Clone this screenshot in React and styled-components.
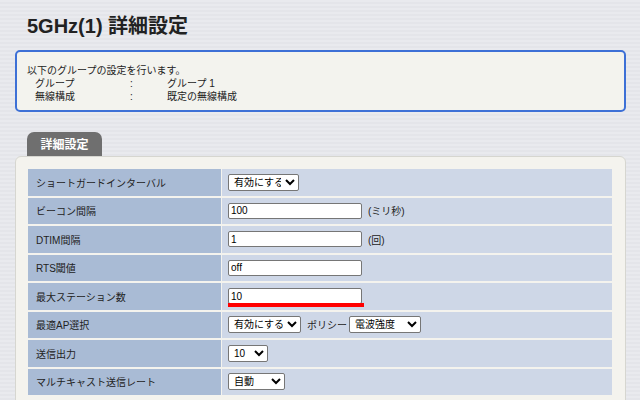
import styled, { createGlobalStyle } from 'styled-components';

const Global = createGlobalStyle`
  body {
    margin: 0;
    font-family: "Liberation Sans", "Noto Sans CJK JP", sans-serif;
    background: repeating-linear-gradient(180deg, #e9eaee 0px, #e9eaee 2px, #dfe0e5 3px, #e9eaee 4px);
    color: #222;
  }
`;

const Page = styled.div`
  width: 640px;
  height: 400px;
  overflow: hidden;
  padding: 14px 14px 0 15px;
  box-sizing: border-box;
`;

const Title = styled.h1`
  margin: 0 0 12px 12px;
  font-size: 20px;
  font-weight: bold;
  line-height: 24px;
  font-family: "Liberation Sans", "Noto Sans CJK JP", sans-serif;
`;

const InfoBox = styled.div`
  border: 2px solid #3d70d6;
  border-radius: 5px;
  background: #f3f3ee;
  padding: 12px 10px 10px;
  height: 62px;
  box-sizing: border-box;
  font-size: 10px;
  line-height: 13px;
`;

const InfoRow = styled.div`
  display: grid;
  grid-template-columns: 95px 37px auto;
  padding-left: 8px;
`;

const Tab = styled.div`
  margin: 20px 0 0 12px;
  width: 75px;
  height: 24px;
  background: #6f6f6f;
  color: #fff;
  font-weight: bold;
  font-size: 12px;
  line-height: 26px;
  text-align: center;
  border-radius: 7px 7px 0 0;
`;

const Panel = styled.div`
  background: #f4f3ee;
  border: 1px solid #d6d6d0;
  border-radius: 6px 6px 0 0;
  padding: 12px 13px 0 12px;
  height: 260px;
`;

const Table = styled.div`
  display: grid;
  grid-template-columns: 194px 1fr;
  row-gap: 2px;
`;

const Label = styled.div`
  background: #a9bbd5;
  height: 26.5px;
  font-size: 10px;
  display: flex;
  align-items: center;
  padding-left: 8px;
  margin-right: 1px;
`;

const Value = styled.div`
  background: #ced7e7;
  height: 26.5px;
  display: flex;
  align-items: center;
  padding-left: 6px;
  gap: 6px;
  font-size: 10px;
  position: relative;
`;

const Input = styled.input`
  width: 134px;
  height: 16px;
  box-sizing: border-box;
  border: 1px solid #767676;
  border-radius: 2px;
  font-size: 10px;
  padding: 0 2px;
  font-family: inherit;
`;

const Select = styled.select`
  height: 17px;
  width: ${p => p.w}px;
  font-size: 10px;
  font-family: inherit;
  border: 1px solid #767676;
  border-radius: 2px;
  background: #fff;
  padding: 0 1px;
`;

const RedBar = styled.div`
  position: absolute;
  left: 6px;
  top: 20px;
  width: 136px;
  height: 4px;
  background: #f00;
`;

export default function App() {
  return (
    <Page>
      <Global />
      <Title>5GHz(1) 詳細設定</Title>
      <InfoBox>
        <div>以下のグループの設定を行います。</div>
        <InfoRow><span>グループ</span><span>:</span><span>グループ 1</span></InfoRow>
        <InfoRow><span>無線構成</span><span>:</span><span>既定の無線構成</span></InfoRow>
      </InfoBox>
      <Tab>詳細設定</Tab>
      <Panel>
        <Table>
          <Label>ショートガードインターバル</Label>
          <Value><Select w={71}><option>有効にする</option></Select></Value>
          <Label>ビーコン間隔</Label>
          <Value><Input defaultValue="100" /><span>(ミリ秒)</span></Value>
          <Label>DTIM間隔</Label>
          <Value><Input defaultValue="1" /><span>(回)</span></Value>
          <Label>RTS閾値</Label>
          <Value><Input defaultValue="off" /></Value>
          <Label>最大ステーション数</Label>
          <Value><Input defaultValue="10" /><RedBar /></Value>
          <Label>最適AP選択</Label>
          <Value>
            <Select w={73}><option>有効にする</option></Select>
            <span>ポリシー</span>
            <Select w={72} style={{ marginLeft: -4 }}><option>電波強度</option></Select>
          </Value>
          <Label>送信出力</Label>
          <Value><Select w={40}><option>10</option></Select></Value>
          <Label>マルチキャスト送信レート</Label>
          <Value><Select w={57}><option>自動</option></Select></Value>
        </Table>
      </Panel>
    </Page>
  );
}
